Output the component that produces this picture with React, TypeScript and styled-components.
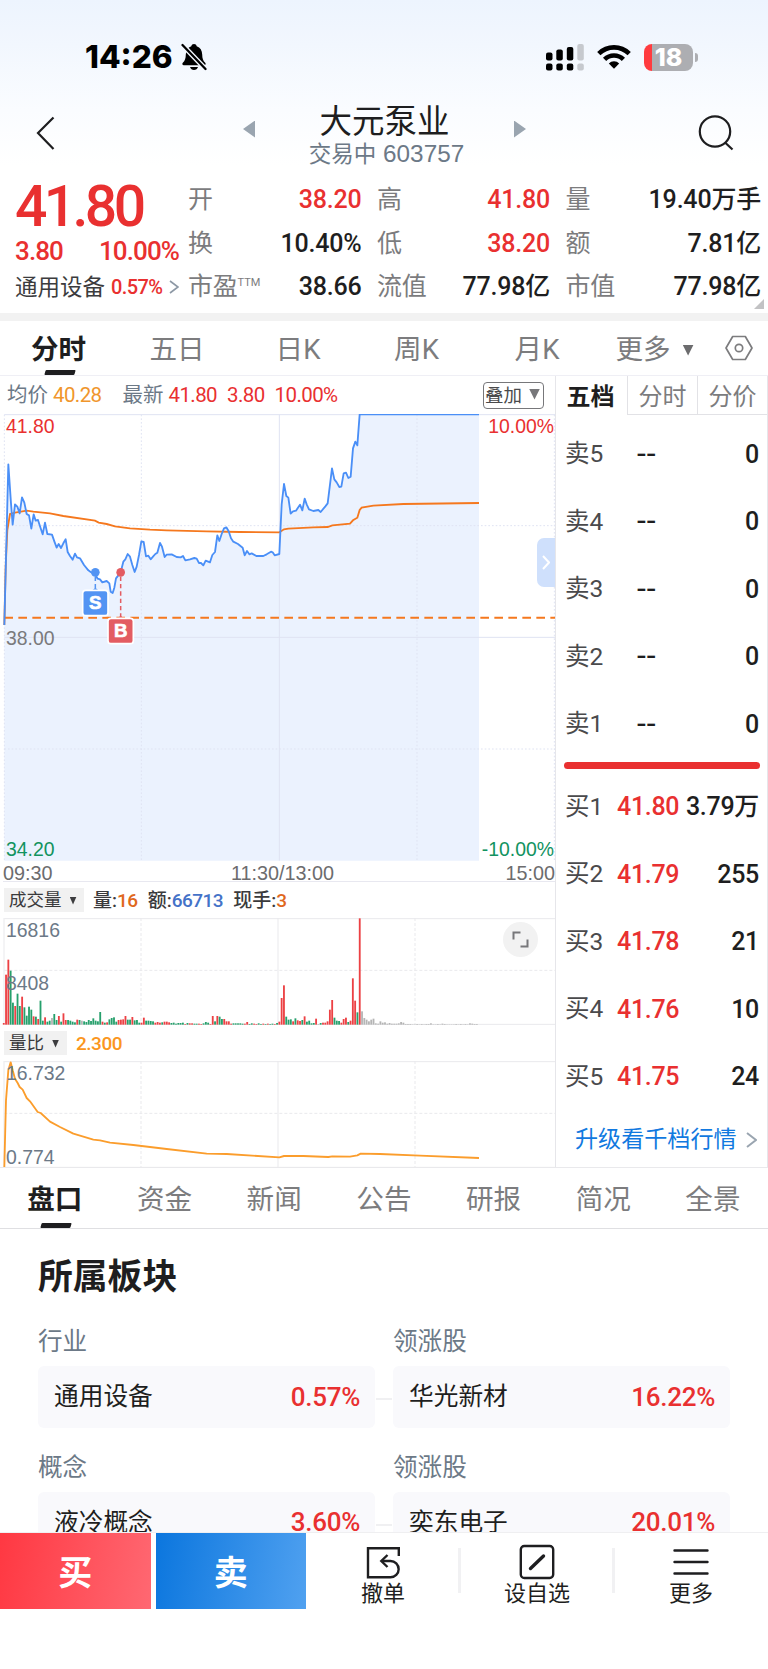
import React from "react";
import styled, { createGlobalStyle, css } from "styled-components";

const RED = "#e93030";
const GREEN = "#12935f";
const INK = "#1e1e20";
const GREY = "#7c7c7e";
const SLATE = "#6c7987";
const BLUE = "#4a8ff7";
const ORANGE = "#f5781e";

const Global = createGlobalStyle`
  * { box-sizing: border-box; }
  body {
    margin: 0;
    background: #fff;
    color: ${INK};
    font-family: Roboto, "Noto Sans CJK SC", sans-serif;
    line-height: 1;
    white-space: nowrap;
  }
  svg { display: block; flex: none; }
`;

const Screen = styled.main`
  width: 768px;
  height: 1669px;
  display: flex;
  flex-direction: column;
  overflow: hidden;
`;

/* ---------- header ---------- */

const Header = styled.header`
  height: 180px;
  flex: none;
  background: linear-gradient(180deg, #edf4fe 0, #f2f7fe 45px, #fafcff 110px, #fff 165px);
`;

const StatusBar = styled.div`
  height: 88px;
  padding: 26px 70px 0 85px;
  display: flex;
  align-items: center;
`;

const Clock = styled.span`
  font: 800 31.5px/1 Inter, sans-serif;
  letter-spacing: 0;
  color: #000;
  width: 96px;
`;

const Spacer = styled.div<{ $width?: number; $height?: number }>`
  flex: ${(p) => (p.$width || p.$height ? `0 0 ${p.$width ?? p.$height}px` : 1)};
`;

const Battery = styled.div`
  width: 49px;
  height: 27px;
  margin-left: 13px;
  border-radius: 8px;
  background: linear-gradient(90deg, #ff3b3f 0 8.5px, #adaeb2 8.5px);
  color: #fff;
  display: flex;
  align-items: center;
  justify-content: center;
  font: 800 25px/1 Inter, sans-serif;
`;

const BatteryCap = styled.div`
  width: 3px;
  height: 9px;
  margin-left: 2px;
  border-radius: 0 3px 3px 0;
  background: #adaeb2;
`;

const NavBar = styled.div`
  height: 89px;
  padding: 0 34px 0 36px;
  display: flex;
  align-items: center;
  justify-content: space-between;
`;

const TitleGroup = styled.div`
  display: flex;
  align-items: center;
  gap: 52px;
  margin-left: 16px;
`;

const Triangle = styled.i<{ $dir: "left" | "right" }>`
  width: 12px;
  height: 17px;
  margin-bottom: 7px;
  background: #9aa5b0;
  clip-path: ${(p) =>
    p.$dir === "left" ? "polygon(100% 0, 100% 100%, 0 50%)" : "polygon(0 0, 100% 50%, 0 100%)"};
`;

const TitleText = styled.div`
  width: 155px;
  display: flex;
  flex-direction: column;
  align-items: center;
  gap: 3px;
  padding-top: 8px;
`;

const StockName = styled.h1`
  margin: 0;
  font-size: 32.5px;
  font-weight: 400;
  height: 33px;
`;

const StockCode = styled.div`
  font: 24.3px/1 "Liberation Sans", "Noto Sans CJK SC", sans-serif;
  color: ${SLATE};
  padding-left: 4px;
  span { font-size: 22.5px; }
`;

/* ---------- quote ---------- */

const Quote = styled.section`
  height: 133px;
  flex: none;
  display: flex;
  position: relative;
  padding-left: 15px;
`;

const PriceBlock = styled.div`
  width: 173px;
  display: flex;
  flex-direction: column;
`;

const BigPrice = styled.div`
  height: 55px;
  font-size: 57px;
  line-height: 54px;
  font-weight: 500;
  letter-spacing: -3.6px;
  color: ${RED};
`;

const ChangeRow = styled.div`
  display: flex;
  justify-content: space-between;
  width: 164px;
  height: 32px;
  align-items: center;
  font-size: 26px;
  letter-spacing: -0.9px;
  font-weight: 500;
  color: ${RED};
`;

const SectorRow = styled.div`
  display: flex;
  align-items: center;
  height: 40px;
  font-size: 22.5px;
  color: #3c3c3e;
  b {
    margin: 0 7px 0 6px;
    font-size: 20px;
    font-weight: 500;
    letter-spacing: -0.6px;
    color: ${RED};
  }
`;

const Stats = styled.div`
  display: grid;
  grid-template-columns: 173.5px 173px 195.5px;
  grid-template-rows: repeat(3, 43.5px);
  column-gap: 15.5px;
  margin-top: -2px;
`;

const Stat = styled.div<{ $up?: boolean }>`
  display: flex;
  justify-content: space-between;
  align-items: center;
  font-size: 25px;
  color: ${(p) => (p.$up ? RED : INK)};
  font-weight: 500;
  letter-spacing: -0.2px;
  label {
    color: ${GREY};
    font-weight: 400;
  }
  sup {
    font-size: 11px;
    line-height: 0;
    vertical-align: 9px;
    letter-spacing: 0;
  }
`;

const Corner = styled.i`
  position: absolute;
  right: 4px;
  bottom: 4px;
  width: 10px;
  height: 10px;
  background: #c2c2c4;
  clip-path: polygon(100% 0, 100% 100%, 0 100%);
`;

const Band = styled.div`
  height: 8px;
  flex: none;
  background: #f2f2f2;
`;

/* ---------- period tabs ---------- */

const Tabs = styled.nav`
  height: 55px;
  flex: none;
  border-bottom: 1px solid #efeff5;
  display: flex;
  align-items: center;
  padding: 0 15px 0 0;
  justify-content: space-between;
`;

const activeTab = css`
  color: ${INK};
  font-weight: 700;
  position: relative;
  &::after {
    content: "";
    position: absolute;
    left: 50%;
    bottom: 0;
    width: 30px;
    height: 5px;
    margin-left: -14px;
    background: ${INK};
    border-radius: 1px;
    transform: skewX(-16deg);
  }
`;

const Tab = styled.span<{ $active?: boolean; $width: number }>`
  width: ${(p) => p.$width}px;
  flex: none;
  height: 100%;
  padding-top: 4px;
  display: flex;
  align-items: center;
  justify-content: center;
  gap: 12px;
  font-size: 27.6px;
  color: ${GREY};
  ${(p) => p.$active && activeTab}
`;

const TabGroup = styled.div`
  height: 100%;
  display: flex;
`;

const Caret = styled.i<{ $size?: number; $color?: string }>`
  display: inline-block;
  flex: none;
  width: ${(p) => p.$size ?? 7}px;
  height: ${(p) => p.$size ?? 8}px;
  background: ${(p) => p.$color ?? "#3c3c3e"};
  clip-path: polygon(0 0, 100% 0, 50% 100%);
`;

/* ---------- market area ---------- */

const Market = styled.section`
  height: 792px;
  flex: none;
  display: flex;
  border-bottom: 1px solid #e9e9ec;
`;

const Charts = styled.div`
  width: 555px;
  flex: none;
  display: flex;
  flex-direction: column;
`;

const InfoRow = styled.div`
  height: 38px;
  flex: none;
  display: flex;
  align-items: center;
  padding: 0 11px 0 7px;
  font-size: 20.5px;
  color: ${SLATE};
`;

const Figure = styled.span<{ $color: string; $before?: number; $after?: number }>`
  color: ${(p) => p.$color};
  font-size: 20.5px;
  letter-spacing: -0.6px;
  margin: 0 ${(p) => p.$after ?? 0}px 0 ${(p) => p.$before ?? 5}px;
`;

const OverlayButton = styled.button`
  width: 61px;
  height: 27px;
  padding: 0 0 2px 1px;
  border: 1.5px solid #77777a;
  border-radius: 4px;
  background: #fff;
  color: #4a4a4c;
  font: 18.5px/1 "Noto Sans CJK SC", sans-serif;
  display: flex;
  align-items: center;
  gap: 7px;
`;

const Plot = styled.div<{ $height: number }>`
  position: relative;
  height: ${(p) => p.$height}px;
  flex: none;
`;

const AxisLabel = styled.span<{ $top: number; $color?: string; $right?: boolean }>`
  position: absolute;
  top: ${(p) => p.$top}px;
  ${(p) => (p.$right ? "right: 1px" : "left: 6px")};
  font: 19.4px/20px "Liberation Sans", sans-serif;
  color: ${(p) => p.$color ?? SLATE};
`;

const Handle = styled.div`
  position: absolute;
  right: 0;
  top: 124px;
  width: 18px;
  height: 49px;
  border-radius: 7px 0 0 7px;
  background: #cfe0fc;
  display: flex;
  align-items: center;
  justify-content: center;
`;

const TimeAxis = styled.div`
  height: 21px;
  flex: none;
  padding-top: 4px;
  margin-left: 3px;
  border-bottom: 1px solid #e8e8f0;
  display: flex;
  justify-content: space-between;
  align-items: center;
  font: 19.8px/20px "Liberation Sans", sans-serif;
  color: #6c6c6e;
  span:nth-child(2) { margin-left: 7px; }
`;

const IndicatorRow = styled.div<{ $height: number }>`
  height: ${(p) => p.$height}px;
  flex: none;
  padding-left: 4px;
  display: flex;
  align-items: center;
  font-size: 19px;
  font-weight: 500;
  color: #3a3a3c;
`;

const IndicatorName = styled.span<{ $width: number }>`
  width: ${(p) => p.$width}px;
  height: 24px;
  margin-right: 9px;
  background: #f1f1f1;
  display: flex;
  align-items: center;
  padding: 1px 0 0 5px;
  gap: 8px;
  font-size: 17.5px;
  font-weight: 400;
`;

const Reading = styled.span<{ $color: string }>`
  color: ${(p) => p.$color};
  letter-spacing: -0.5px;
  margin-right: 10px;
`;

const ExpandButton = styled.button`
  position: absolute;
  right: 17px;
  top: 4px;
  width: 35px;
  height: 35px;
  padding: 0;
  border: 0;
  border-radius: 50%;
  background: #f2f2f2;
  display: flex;
  align-items: center;
  justify-content: center;
`;

/* ---------- order book ---------- */

const Book = styled.aside`
  width: 213px;
  flex: none;
  border-left: 1.5px solid #e6e6ea;
  border-right: 1px solid #e6e6ea;
  display: flex;
  flex-direction: column;
`;

const BookTabs = styled.div`
  height: 39px;
  flex: none;
  display: flex;
`;

const BookTab = styled.span<{ $active?: boolean }>`
  flex: 1;
  display: flex;
  align-items: center;
  justify-content: center;
  font-size: 24px;
  color: ${(p) => (p.$active ? INK : GREY)};
  font-weight: ${(p) => (p.$active ? 700 : 400)};
  padding-top: 3px;
  ${(p) =>
    p.$active ? "padding-right: 2px;" : "border-left: 1.5px solid #e2e2e6; border-bottom: 1.5px solid #e2e2e6;"}
`;

const Level = styled.div`
  height: 67.5px;
  flex: none;
  padding: 1px 8px 0 9px;
  display: flex;
  align-items: center;
  font-size: 25px;
  font-weight: 500;
  letter-spacing: -0.3px;
`;

const LevelName = styled.span`
  width: 52px;
  font-size: 24.5px;
  font-weight: 400;
  letter-spacing: 0;
  color: #4a4a4c;
`;

const LevelPrice = styled.span<{ $empty: boolean }>`
  flex: 1;
  ${(p) =>
    p.$empty
      ? `padding: 0 0 3px 20px; font-size: 32px; font-weight: 400; letter-spacing: 1px; color: ${INK};`
      : `color: ${RED};`}
`;

const Divider = styled.div`
  height: 7px;
  flex: none;
  margin: 4px 7px 4px 8px;
  border-radius: 4px;
  background: ${RED};
`;

const Upgrade = styled.a`
  display: flex;
  align-items: center;
  height: 57px;
  flex: none;
  padding: 2px 0 0 19px;
  gap: 9px;
  font-size: 23.1px;
  color: #1179e0;
`;

/* ---------- plates ---------- */

const SectionTabs = styled.nav`
  height: 61px;
  flex: none;
  display: flex;
  border-bottom: 1.5px solid #dfdfe2;
`;

const Plates = styled.section`
  height: 303px;
  flex: none;
  overflow: hidden;
  padding: 30px 38px 0;
`;

const Heading = styled.h2`
  margin: 0 0 33px;
  font-size: 34.8px;
  line-height: 36px;
  font-weight: 700;
`;

const PlateGrid = styled.div`
  display: grid;
  grid-template-columns: 337px 337px;
  column-gap: 18px;
`;

const PlateCell = styled.div`
  height: 125.5px;
  position: relative;
`;

const PlateLabel = styled.div`
  height: 38px;
  line-height: 28px;
  font-size: 24.6px;
  color: ${SLATE};
`;

const PlateCard = styled.div`
  height: 62px;
  border-radius: 6px;
  background: #f9f9fc;
  padding: 1px 15px 0 16px;
  display: flex;
  align-items: center;
  justify-content: space-between;
  font-size: 24.7px;
  b {
    font-size: 26px;
    font-weight: 500;
    letter-spacing: -0.3px;
    padding-bottom: 2px;
    color: ${RED};
  }
`;

const Connector = styled.i`
  position: absolute;
  left: 338px;
  top: 70px;
  width: 16px;
  height: 2px;
  background: #f0f0f2;
`;

/* ---------- bottom bar ---------- */

const BottomBar = styled.footer`
  height: 77px;
  flex: none;
  display: flex;
  border-top: 1px solid #efeff1;
`;

const TradeButton = styled.button<{ $side: "buy" | "sell" }>`
  width: 150.5px;
  height: 76px;
  margin-right: ${(p) => (p.$side === "buy" ? 5 : 0)}px;
  padding: 0 0 1px;
  border: 0;
  color: #fff;
  font: 700 34px/1 "Noto Sans CJK SC", sans-serif;
  background: ${(p) =>
    p.$side === "buy"
      ? "linear-gradient(100deg, #ff3842, #ff6872)"
      : "linear-gradient(100deg, #0b76de, #50a1f0)"};
`;

const Action = styled.div`
  flex: 1;
  position: relative;
  display: flex;
  flex-direction: column;
  align-items: center;
  gap: 3px;
  padding-top: 11px;
  font-size: 22px;
  & + &::before {
    content: "";
    position: absolute;
    left: -2px;
    top: 15px;
    width: 3px;
    height: 45px;
    background: #f1f1f3;
  }
`;

/* ---------- chart data ---------- */

type Point = [number, number];

// Chart units: three per pixel.
const morning: Point[] = [
  [13, 675], [25, 193], [33, 310], [38, 374], [45, 313], [52, 320], [59, 340], [66, 292], [73, 308], [80, 342],
  [87, 346], [94, 386], [101, 343], [107, 362], [114, 360], [121, 382], [128, 403], [135, 368], [142, 402],
  [156, 404], [163, 424], [170, 443], [176, 432], [183, 444], [190, 430], [197, 418], [203, 456], [210, 468],
  [218, 479], [225, 461], [231, 472], [240, 475], [252, 495], [265, 511], [272, 516], [286, 524], [293, 536],
  [300, 538], [307, 547], [320, 543], [328, 550], [332, 575], [338, 579], [343, 563], [348, 535], [362, 517],
  [370, 485], [376, 478], [383, 462], [390, 470], [397, 495], [404, 516], [410, 500], [417, 465], [424, 424],
  [431, 426], [438, 469], [445, 467], [452, 478], [459, 470], [466, 462], [472, 458], [480, 429], [486, 440],
  [494, 471], [500, 464], [515, 463], [530, 471], [542, 472], [549, 468], [556, 481], [570, 478], [583, 474],
  [590, 476], [597, 489], [603, 489], [610, 496], [617, 482], [630, 487], [637, 465], [645, 456], [652, 406],
  [658, 423], [665, 402], [672, 385], [679, 382], [686, 394], [693, 415], [700, 425], [714, 432], [728, 443],
  [734, 466], [741, 453], [748, 463], [755, 460], [769, 468], [790, 468], [800, 463], [813, 455], [818, 457],
  [824, 466], [838, 462],
];

const afternoon: Point[] = [
  [845, 313], [852, 252], [859, 288], [865, 293], [872, 341], [879, 334], [888, 332], [900, 314], [907, 331],
  [914, 296], [920, 313], [927, 328], [940, 333], [955, 330], [962, 336], [976, 319], [983, 310], [996, 205],
  [1003, 238], [1010, 247], [1018, 261], [1024, 260], [1031, 220], [1038, 218], [1045, 234], [1052, 230],
  [1059, 145], [1066, 125], [1072, 136], [1079, 43], [1437, 43],
];

const average: Point[] = [
  [13, 675], [17, 500], [22, 390], [30, 342], [45, 338], [80, 332], [100, 335], [150, 340], [190, 348],
  [285, 362], [296, 368], [320, 372], [345, 379], [390, 385], [450, 389], [500, 391], [620, 394], [720, 396],
  [838, 397], [852, 388], [865, 386], [940, 382], [983, 381], [997, 376], [1050, 371], [1059, 361],
  [1072, 353], [1079, 330], [1085, 323], [1120, 317], [1210, 312], [1437, 309],
];

const ratio: Point[] = [
  [13, 980], [18, 780], [25, 690], [32, 666], [38, 690], [45, 715], [53, 728], [59, 740], [68, 748], [80, 773],
  [90, 783], [113, 815], [122, 818], [150, 844], [180, 860], [220, 880], [280, 898], [300, 900], [330, 907],
  [400, 914], [500, 926], [620, 940], [680, 941], [838, 951], [852, 947], [910, 947], [985, 950], [997, 948],
  [1050, 949], [1072, 945], [1082, 940], [1140, 941], [1260, 946], [1437, 953],
];

// One entry per minute: bar height followed by r (up), g (down) or x (flat).
const volumes = (
  "5r 150r 195r 162g 66g 56r 93g 56g 84r 52g 27g 54g 45g 25r 24g 17r 72g 12g 22r 9g 12g 20x 32g 14g 26r 9g 34r 14r 14g 12g " +
  "9g 7g 15r 14g 12x 10g 8g 14g 11g 19g 12g 10g 38g 9r 6g 7r 16g 20g 22g 9g 14r 15r 16r 26r 15g 15g 23r 13g 14g 6g " +
  "6r 21r 12g 12g 11g 10g 6r 8r 6r 7g 9r 9r 7r 5g 6g 3g 5g 5g 6g 2r 5g 4r 4r 3g 3g 3r 2r 4g 8g 6g " +
  "2r 26r 10g 26r 24g 17g 17r 10r 10r 3r 4g 4g 4g 4g 3g 3r 8r 2g 4g 3r 2r 4g 2g 3r 2g 3r 2g 3g 2r 5g " +
  "9r 80r 118r 24g 15g 16g 10r 19g 13r 11r 14g 25r 9g 12g 4g 5g 18r 2x 5g 6r 6r 10r 45r 74r 21g 12g 11g 6r 17r 21r " +
  "8g 12r 139r 72r 37g 319r 40x 20x 15x 10x 15x 18x 4x 3x 10x 6x 7x 3x 5x 3x 3x 3x 4x 8x 6x 2x 2x 2x 1x 1x " +
  "2x 1x 2x 1x 2x 2x 4x 1x 1x 2x 1x 3x 2x 1x 1x 1x 1x 2x 1x 2x 1x 2x 1x 4x 3x 2x 2x"
).split(" ");

const barColor: Record<string, string> = { r: "#ec4144", g: "#26a06c", x: "#b5b5b5" };

const toPath = (points: Point[]) => "M" + points.map((p) => p.join(" ")).join("L");
const pricePath = toPath([...morning, ...afternoon]);

/* ---------- chart drawings ---------- */

const Marker = ({ x, boxY, color, letter }: { x: number; boxY: number; color: string; letter: string }) => (
  <g>
    <path d={`M${x} 530V${boxY}`} stroke={color} strokeWidth="4.5" strokeDasharray="13 9" />
    <circle cx={x} cy="517" r="13" fill={color} />
    <path d={`M${x - 12} ${boxY}L${x} ${boxY - 10}L${x + 12} ${boxY}Z`} fill={color} />
    <rect x={x - 38} y={boxY - 2} width="76" height="76" rx="9" fill={color} stroke="#fff" strokeWidth="5" />
    <text
      x={x}
      y={boxY + 55}
      fill="#fff"
      stroke="#fff"
      strokeWidth="2"
      fontFamily="Liberation Sans"
      fontWeight="700"
      fontSize="56"
      textAnchor="middle"
    >
      {letter}
    </text>
  </g>
);

const PriceChart = () => (
  <svg width="555" height="447" viewBox="0 42 1665 1341">
    <path d={`${pricePath}V1382H13Z`} fill="#ebf2fe" />
    <g stroke="#dfe3f2" strokeWidth="3" fill="none">
      <path d="M13 44H1665M13 712H1665M838 44V1382" />
      <path d="M13 377H1665M13 1047H1665M424 44V1382M1251 44V1382M13 44V1382M1663 44V1382" strokeDasharray="5 6" />
    </g>
    <path d="M13 653H1665" stroke={ORANGE} strokeWidth="6" strokeDasharray="26 16" />
    <path d={toPath(average)} fill="none" stroke={ORANGE} strokeWidth="5.5" />
    <path d={pricePath} fill="none" stroke={BLUE} strokeWidth="5.5" strokeLinejoin="round" />
    <Marker x={286} boxY={573} color="#5394f3" letter="S" />
    <Marker x={362} boxY={657} color="#e35c62" letter="B" />
  </svg>
);

const Grid = ({ top }: { top: number }) => (
  <g stroke="#e9e9ec" strokeWidth="3" fill="none">
    <path d={`M13 ${top + 2}H1665M13 ${top + 319}H1665M834 ${top}V${top + 319}M12 ${top}V${top + 319}`} />
    <path d={`M13 ${top + 157}H1665M423 ${top}V${top + 319}M1245 ${top}V${top + 319}`} strokeDasharray="9 6" />
  </g>
);

const VolumeChart = () => (
  <svg width="555" height="107" viewBox="0 234 1665 321">
    <Grid top={234} />
    {volumes.map((v, i) => {
      const height = parseInt(v, 10);
      return (
        <rect key={i} x={8.5 + 6.89 * i} y={554 - height} width="5.5" height={height} fill={barColor[v.slice(-1)]} />
      );
    })}
  </svg>
);

const RatioChart = () => (
  <svg width="555" height="107" viewBox="0 662 1665 321">
    <Grid top={662} />
    <path d={toPath(ratio)} fill="none" stroke="#fb9d2c" strokeWidth="5.5" strokeLinejoin="round" />
  </svg>
);

/* ---------- icons ---------- */

const MutedBell = () => (
  <svg width="26" height="28" viewBox="0 0 26 28">
    <path d="M13 1c1.400 0 2.400.8 2.700 2.200 3.600 1.200 5.400 4.400 5.500 8.200.1 4 .8 6 3 8.400.9 1 .5 2.400-1 2.400H2.800c-1.500 0-1.900-1.400-1-2.400 2.200-2.400 2.900-4.400 3-8.400.1-3.800 1.900-7 5.500-8.200C10.600 1.800 11.600 1 13 1Z" />
    <path d="M9 24h8c-.6 1.800-2 3-4 3s-3.400-1.200-4-3Z" />
    <path d="M2 2.500 25 26.500" stroke="#f4f8fe" strokeWidth="5" />
    <path d="M1.500 2 24.500 26" stroke="#000" strokeWidth="2.300" strokeLinecap="round" />
  </svg>
);

const Signal = () => (
  <svg width="38" height="27" viewBox="0 0 38 27">
    <rect x="0" y="8.500" width="6.500" height="8" rx="2" />
    <rect x="10.300" y="5.500" width="6.500" height="11" rx="2" />
    <rect x="20.800" y="3" width="6.500" height="13.500" rx="2" />
    <rect x="31.300" y="0" width="6.500" height="16.500" rx="2" fill="#c6c9ce" />
    <rect x="0" y="19.500" width="6.500" height="7" rx="2" />
    <rect x="10.300" y="19.500" width="6.500" height="7" rx="2" />
    <rect x="20.800" y="19.500" width="6.500" height="7" rx="2" />
    <rect x="31.300" y="19.500" width="6.500" height="7" rx="2" fill="#c6c9ce" />
  </svg>
);

const Wifi = () => (
  <svg width="34" height="26" viewBox="0 0 34 26" fill="none" stroke="#000" strokeWidth="4.600">
    <path d="M1.800 9.600a21.600 21.600 0 0 1 30.400 0" />
    <path d="M7.600 15.300a13.400 13.400 0 0 1 18.800 0" />
    <path d="M11.800 19.500a7.400 7.400 0 0 1 10.400 0L17 24.800Z" fill="#000" stroke="none" />
  </svg>
);

const ChevronRight = ({ w, h, color, stroke = 2 }: { w: number; h: number; color: string; stroke?: number }) => (
  <svg width={w} height={h} viewBox={`0 0 ${w} ${h}`} fill="none" stroke={color} strokeWidth={stroke}>
    <path d={`M1 1 ${w - 1} ${h / 2} 1 ${h - 1}`} />
  </svg>
);

const levels = {
  sell: ["5", "4", "3", "2", "1"].map((n) => ["卖" + n, "--", "0"]),
  buy: [
    ["买1", "41.80", "3.79万"],
    ["买2", "41.79", "255"],
    ["买3", "41.78", "21"],
    ["买4", "41.76", "10"],
    ["买5", "41.75", "24"],
  ],
};

const stats: { label: string; value: string; up?: boolean; ttm?: boolean }[] = [
  { label: "开", value: "38.20", up: true },
  { label: "高", value: "41.80", up: true },
  { label: "量", value: "19.40万手" },
  { label: "换", value: "10.40%" },
  { label: "低", value: "38.20", up: true },
  { label: "额", value: "7.81亿" },
  { label: "市盈", value: "38.66", ttm: true },
  { label: "流值", value: "77.98亿" },
  { label: "市值", value: "77.98亿" },
];

const plates = [
  { label: "行业", name: "通用设备", change: "0.57%" },
  { label: "领涨股", name: "华光新材", change: "16.22%" },
  { label: "概念", name: "液冷概念", change: "3.60%" },
  { label: "领涨股", name: "奕东电子", change: "20.01%" },
];

const Levels = ({ rows }: { rows: string[][] }) => (
  <>
    {rows.map(([name, price, amount]) => (
      <Level key={name}>
        <LevelName>{name}</LevelName>
        <LevelPrice $empty={price === "--"}>{price}</LevelPrice>
        <span>{amount}</span>
      </Level>
    ))}
  </>
);

export default function App() {
  return (
    <Screen>
      <Global />
      <Header>
        <StatusBar>
          <Clock>14:26</Clock>
          <MutedBell />
          <Spacer />
          <Signal />
          <Spacer $width={13} />
          <Wifi />
          <Battery>18</Battery>
          <BatteryCap />
        </StatusBar>
        <NavBar>
          <svg width="20" height="34" viewBox="0 0 20 34" fill="none" stroke={INK} strokeWidth="2.200">
            <path d="M17.500 1.500 2 17 17.500 33" />
          </svg>
          <TitleGroup>
            <Triangle $dir="left" />
            <TitleText>
              <StockName>大元泵业</StockName>
              <StockCode>
                <span>交易中</span> 603757
              </StockCode>
            </TitleText>
            <Triangle $dir="right" />
          </TitleGroup>
          <svg width="37" height="36" viewBox="0 0 37 36" fill="none" stroke={INK} strokeWidth="2.200">
            <circle cx="18" cy="16.500" r="15.200" />
            <path d="M28 27.500 35.500 34.500" />
          </svg>
        </NavBar>
      </Header>

      <Quote>
        <PriceBlock>
          <BigPrice>41.80</BigPrice>
          <ChangeRow>
            <span>3.80</span>
            <span>10.00%</span>
          </ChangeRow>
          <SectorRow>
            通用设备<b>0.57%</b>
            <ChevronRight w={10} h={14} color="#8d98a5" stroke={1.6} />
          </SectorRow>
        </PriceBlock>
        <Stats>
          {stats.map((s) => (
            <Stat key={s.label} $up={s.up}>
              <label>
                {s.label}
                {s.ttm && <sup>TTM</sup>}
              </label>
              <span>{s.value}</span>
            </Stat>
          ))}
        </Stats>
        <Corner />
      </Quote>
      <Band />

      <Tabs>
        <TabGroup>
          <Tab $width={117} $active>分时</Tab>
          <Tab $width={120}>五日</Tab>
          <Tab $width={122}>日K</Tab>
          <Tab $width={115}>周K</Tab>
          <Tab $width={126}>月K</Tab>
          <Tab $width={109}>
            更多
            <Caret $size={11} $color="#6c6c6e" />
          </Tab>
        </TabGroup>
        <svg width="28" height="26" viewBox="0 0 28 26" fill="none" stroke={GREY} strokeWidth="1.700">
          <path d="M7.700 1.500h12.600L27 13l-6.700 11.500H7.700L1 13Z" strokeLinejoin="round" />
          <circle cx="14" cy="13" r="3.700" />
        </svg>
      </Tabs>

      <Market>
        <Charts>
          <InfoRow>
            均价<Figure $color="#f0962c" $after={21}>40.28</Figure>
            最新<Figure $color={RED}>41.80</Figure>
            <Figure $color={RED} $before={10}>3.80</Figure>
            <Figure $color={RED} $before={10}>10.00%</Figure>
            <Spacer />
            <OverlayButton>
              叠加
              <Caret $size={11} $color="#77777a" />
            </OverlayButton>
          </InfoRow>
          <Plot $height={447}>
            <PriceChart />
            <AxisLabel $top={2} $color={RED}>41.80</AxisLabel>
            <AxisLabel $top={2} $color={RED} $right>10.00%</AxisLabel>
            <AxisLabel $top={214} $color="#7a7a7c">38.00</AxisLabel>
            <AxisLabel $top={425} $color={GREEN}>34.20</AxisLabel>
            <AxisLabel $top={425} $color={GREEN} $right>-10.00%</AxisLabel>
            <Handle>
              <ChevronRight w={8} h={15} color="#fff" />
            </Handle>
          </Plot>
          <TimeAxis>
            <span>09:30</span>
            <span>11:30/13:00</span>
            <span>15:00</span>
          </TimeAxis>
          <IndicatorRow $height={36}>
            <IndicatorName $width={80}>
              成交量
              <Caret />
            </IndicatorName>
            量:<Reading $color="#e0681c">16</Reading>
            额:<Reading $color="#4472c8">66713</Reading>
            现手:<Reading $color="#e0681c">3</Reading>
          </IndicatorRow>
          <Plot $height={107}>
            <VolumeChart />
            <AxisLabel $top={2}>16816</AxisLabel>
            <AxisLabel $top={55}>8408</AxisLabel>
            <ExpandButton aria-label="全屏">
              <svg width="17" height="17" viewBox="0 0 17 17" fill="none" stroke="#77777a" strokeWidth="2">
                <path d="M1.500 8.500V1.500H8.500M15.500 8.500V15.500H8.500" />
              </svg>
            </ExpandButton>
          </Plot>
          <IndicatorRow $height={36}>
            <IndicatorName $width={63}>
              量比
              <Caret />
            </IndicatorName>
            <Reading $color="#fb9620">2.300</Reading>
          </IndicatorRow>
          <Plot $height={107}>
            <RatioChart />
            <AxisLabel $top={2}>16.732</AxisLabel>
            <AxisLabel $top={86}>0.774</AxisLabel>
          </Plot>
        </Charts>

        <Book>
          <BookTabs>
            <BookTab $active>五档</BookTab>
            <BookTab>分时</BookTab>
            <BookTab>分价</BookTab>
          </BookTabs>
          <Spacer $height={5} />
          <Levels rows={levels.sell} />
          <Divider />
          <Levels rows={levels.buy} />
          <Upgrade>
            升级看千档行情
            <ChevronRight w={11} h={16} color="#9aa5b0" />
          </Upgrade>
        </Book>
      </Market>

      <SectionTabs>
        {["盘口", "资金", "新闻", "公告", "研报", "简况", "全景"].map((name, i) => (
          <Tab key={name} $width={109.7} $active={i === 0}>
            {name}
          </Tab>
        ))}
      </SectionTabs>

      <Plates>
        <Heading>所属板块</Heading>
        <PlateGrid>
          {plates.map((p, i) => (
            <PlateCell key={p.name}>
              <PlateLabel>{p.label}</PlateLabel>
              <PlateCard>
                {p.name}
                <b>{p.change}</b>
              </PlateCard>
              {i % 2 === 0 && <Connector />}
            </PlateCell>
          ))}
        </PlateGrid>
      </Plates>

      <BottomBar>
        <TradeButton $side="buy">买</TradeButton>
        <TradeButton $side="sell">卖</TradeButton>
        <Action>
          <svg width="36" height="36" viewBox="0 0 36 36" fill="none" stroke={INK} strokeWidth="2.400">
            <path d="M33.800 12V4.200H3V33.300H25.500a8.150 8.150 0 0 0 0-16.300H17" />
            <path d="M22.500 11 16.300 17l6.200 6" />
          </svg>
          撤单
        </Action>
        <Action>
          <svg width="36" height="36" viewBox="0 0 36 36" fill="none" stroke={INK} strokeWidth="2.400">
            <rect x="1.800" y="2" width="32.400" height="32" rx="3.500" />
            <path d="M11.500 24.500 24.500 12" strokeWidth="3.400" strokeLinecap="round" />
          </svg>
          设自选
        </Action>
        <Action>
          <svg width="36" height="36" viewBox="0 0 36 36" fill="none" stroke={INK} strokeWidth="2.400">
            <path d="M1.500 6.500H34.500M1.500 18H34.500M1.500 29.500H34.500" strokeLinecap="round" />
          </svg>
          更多
        </Action>
      </BottomBar>
    </Screen>
  );
}
